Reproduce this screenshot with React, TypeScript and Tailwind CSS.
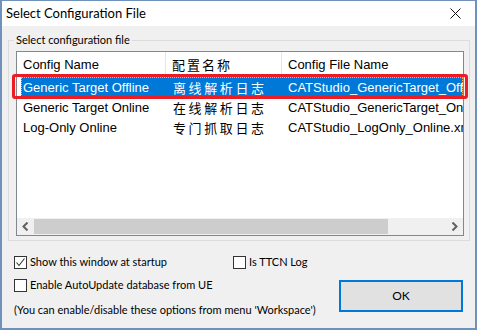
import React from "react";

const ui = { fontFamily: "Lato, 'Noto Sans', sans-serif" };
const list = { fontFamily: "'Liberation Sans', 'Noto Sans CJK SC', sans-serif" };
const cjk = { fontFamily: "'Noto Sans CJK SC', sans-serif" };

const rows = [
  { name: "Generic Target Offline", zh: "离线解析日志", file: "CATStudio_GenericTarget_Offline.xml" },
  { name: "Generic Target Online", zh: "在线解析日志", file: "CATStudio_GenericTarget_Online.xml" },
  { name: "Log-Only Online", zh: "专门抓取日志", file: "CATStudio_LogOnly_Online.xml" },
];

function Checkbox({ checked }: { checked?: boolean }) {
  return (
    <span className="flex h-[13px] w-[13px] shrink-0 items-center justify-center border border-[#333333] bg-white">
      {checked && (
        <svg width="11" height="11" viewBox="0 0 11 11">
          <path d="M1.5 5.5 L4 8.5 L9.5 1.5" fill="none" stroke="#333" strokeWidth="1.1" />
        </svg>
      )}
    </span>
  );
}

function Chevron({ dir }: { dir: "left" | "right" }) {
  return (
    <svg width="7" height="9" viewBox="0 0 7 9">
      <path
        d={dir === "left" ? "M5.5 0.5 L1.5 4.5 L5.5 8.5" : "M1.5 0.5 L5.5 4.5 L1.5 8.5"}
        fill="none"
        stroke="#606060"
        strokeWidth="2"
      />
    </svg>
  );
}

export default function App() {
  return (
    <div
      className="relative flex h-[330px] w-[477px] flex-col overflow-hidden border-x-2 border-b-2 border-t border-[#7191bd] bg-[#f0f0f0] text-[11px] text-black"
      style={ui}
    >
      {/* title bar */}
      <div className="flex h-[25px] shrink-0 items-center justify-between bg-white pl-[4px] pr-[14px]">
        <span className="text-[13px]">Select Configuration File</span>
        <svg width="11" height="11" viewBox="0 0 11 11">
          <path d="M0.5 0.5 L10.5 10.5 M10.5 0.5 L0.5 10.5" stroke="#111" strokeWidth="1" />
        </svg>
      </div>

      <div className="flex flex-1 flex-col pl-[6px]">
        <fieldset className="mt-[6px] w-[462px] border border-[#dcdcdc] pb-[4px] pl-[7px] pt-[3px]">
          <legend className="ml-[-2px] px-[2px] text-[11px] leading-[16px]">Select configuration file</legend>

          {/* list view */}
          <div className="flex h-[185px] w-[448px] flex-col border border-[#828790] bg-white" style={list}>
            <div className="flex h-[25px] shrink-0 text-[13px]">
              <div className="flex w-[149px] items-center border-r border-[#e5e5e5] pl-[6px]">Config Name</div>
              <div className="flex w-[116px] items-center border-r border-[#e5e5e5] pl-[6px] text-[13px] tracking-[2px]" style={cjk}>
                配置名称
              </div>
              <div className="flex flex-1 items-center pl-[6px]">Config File Name</div>
            </div>

            <div className="flex flex-1 flex-col overflow-hidden pl-[4px] text-[13px]">
              {rows.map((r, i) => (
                <div
                  key={r.name}
                  className={
                    "flex h-[20px] shrink-0 items-center whitespace-nowrap pt-[2px] " +
                    (i === 0 ? "bg-[#0078d7] text-white outline-1 outline-dotted outline-offset-[-1px] outline-[#ffb05c]" : "")
                  }
                >
                  <div className="w-[145px] shrink-0 overflow-hidden pl-[2px]">{r.name}</div>
                  <div className="w-[116px] shrink-0 overflow-hidden pl-[7px] tracking-[2.6px]" style={cjk}>
                    {r.zh}
                  </div>
                  <div className="min-w-0 flex-1 overflow-hidden pl-[6px]">{r.file}</div>
                </div>
              ))}
            </div>

            {/* horizontal scrollbar */}
            <div className="flex h-[17px] shrink-0 items-stretch bg-[#f0f0f0] py-[1px]">
              <div className="flex w-[17px] items-center justify-center">
                <Chevron dir="left" />
              </div>
              <div className="w-[354px] bg-[#cdcdcd]" />
              <div className="flex-1" />
              <div className="flex w-[17px] items-center justify-center">
                <Chevron dir="right" />
              </div>
            </div>
          </div>
        </fieldset>

        {/* options */}
        <div className="mt-[14px] flex flex-col pl-[6px] text-[11px]">
          <div className="flex h-[14px] items-center">
            <label className="flex w-[219px] items-center gap-[3px]">
              <Checkbox checked />
              <span>Show this window at startup</span>
            </label>
            <label className="flex items-center gap-[3px]">
              <Checkbox />
              <span>Is TTCN Log</span>
            </label>
          </div>
          <label className="mt-[9px] flex h-[14px] items-center gap-[3px]">
            <Checkbox />
            <span>Enable AutoUpdate database from UE</span>
          </label>
          <span className="mt-[10px] whitespace-nowrap">
            (You can enable/disable these options from menu 'Workspace')
          </span>
        </div>
      </div>

      {/* OK button */}
      <button className="absolute left-[337px] top-[279px] h-[32px] w-[124px] border-2 border-[#0078d7] bg-[#e1e1e1] text-[12px]">
        OK
      </button>

      {/* annotation */}
      <div className="pointer-events-none absolute left-[10px] top-[73px] h-[25px] w-[456px] rounded-[3px] border-[3px] border-[#ec1c24]" />
    </div>
  );
}
